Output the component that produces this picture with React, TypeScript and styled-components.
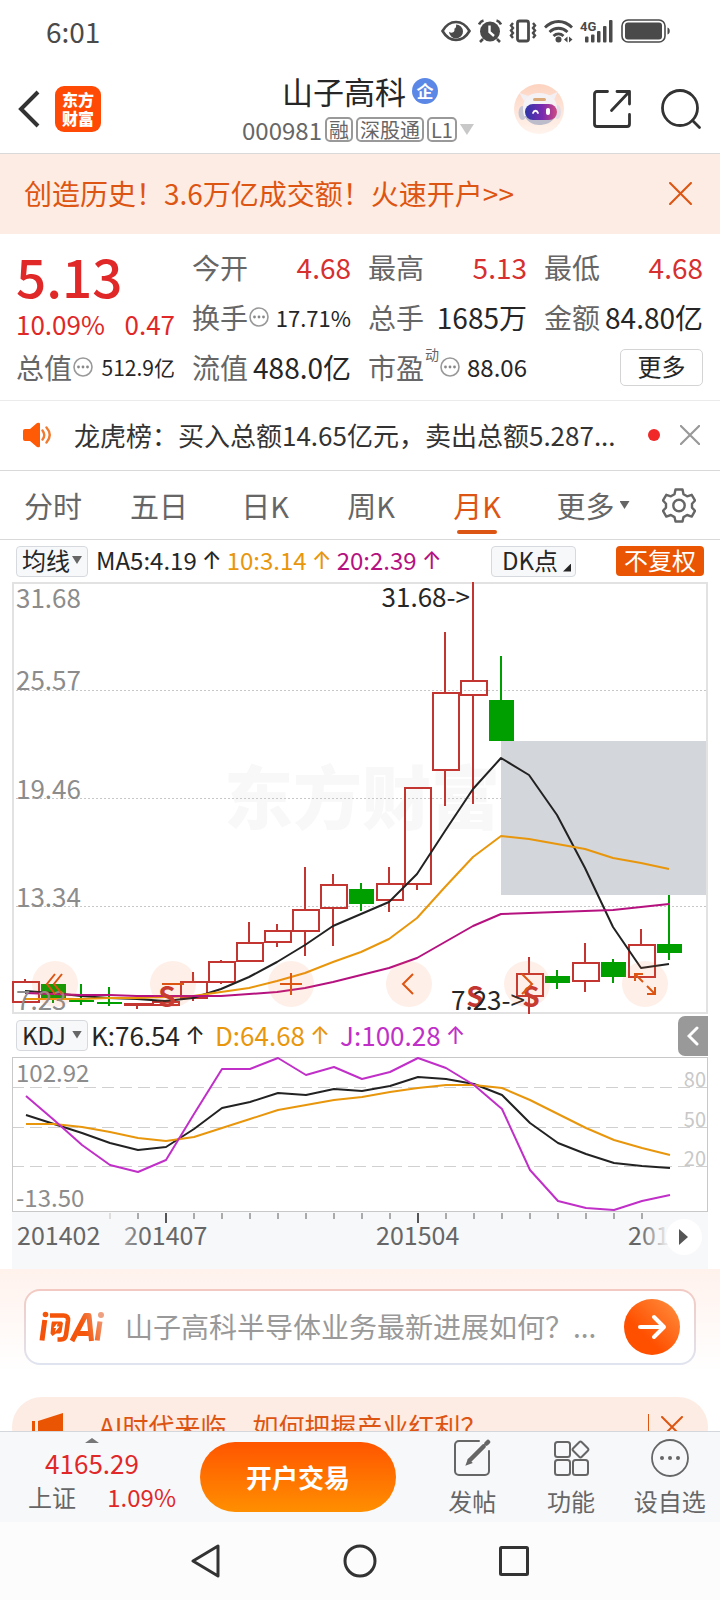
import React from "react";
import styled, { createGlobalStyle, css } from "styled-components";

const color = {
  ink: "#262626",
  text: "#333333",
  sub: "#666666",
  mute: "#8c8c8c",
  line: "#d9d9d9",
  red: "#e02828",
  up: "#c23531",
  down: "#009f00",
  orange: "#dd5512",
  brand: "#ea5504",
  amber: "#e8960c",
  purple: "#b5127f",
  violet: "#c030c8",
  peach: "#fdece3",
  panel: "#f7f8fa",
};

const fontStack = '"Noto Sans CJK SC", "Noto Sans", sans-serif';

const GlobalStyle = createGlobalStyle`
  *, *::before, *::after { box-sizing: border-box; }
  body { margin: 0; background: #fff; color: ${color.text}; font-family: ${fontStack}; }
  button, input { font: inherit; color: inherit; margin: 0; }
  button { padding: 0; border: 0; background: none; cursor: pointer; }
  svg { display: block; flex: none; }
  a { color: inherit; text-decoration: none; }
`;

const Shell = styled.div`
  display: flex;
  flex-direction: column;
  height: 100vh;
  overflow: hidden;
`;

const Main = styled.main`
  flex: 1;
  min-height: 0;
  overflow: hidden;
`;

/* ---------- status bar ---------- */
const StatusBar = styled.div`
  display: flex;
  align-items: center;
  justify-content: space-between;
  height: 64px;
  padding: 0 48px 2px 46px;
  font-size: 28px;
  line-height: 32px;
  color: #4a4a4a;
`;

const StatusIcons = styled.div`
  display: flex;
  align-items: center;
  gap: 7px;
`;

/* ---------- header ---------- */
const Header = styled.header`
  display: grid;
  grid-template-columns: 1fr auto 1fr;
  align-items: center;
  height: 90px;
  border-bottom: 1px solid ${color.line};
`;

const HeaderSide = styled.div<{ $end?: boolean }>`
  display: flex;
  align-items: center;
  gap: ${(p) => (p.$end ? "28px" : "14px")};
  padding: ${(p) => (p.$end ? "0 18px 0 0" : "0 0 0 17px")};
  justify-content: ${(p) => (p.$end ? "flex-end" : "flex-start")};
`;

const IconButton = styled.button`
  display: flex;
  align-items: center;
  justify-content: center;
`;

const BrandMark = styled.a`
  display: grid;
  place-content: center;
  width: 46px;
  height: 46px;
  border-radius: 9px;
  background: #ff4a05;
  color: #fff;
  font-size: 16px;
  font-weight: 900;
  line-height: 19px;
`;

const TitleBlock = styled.div`
  display: flex;
  flex-direction: column;
  align-items: center;
  gap: 8px;
  margin-right: 4px;
`;

const TitleRow = styled.h1`
  display: flex;
  align-items: center;
  gap: 6px;
  margin: 0 0 0 4px;
  font-size: 31px;
  font-weight: 400;
  line-height: 34px;
  color: ${color.ink};
`;

const CompanyBadge = styled.span`
  width: 26px;
  height: 26px;
  border-radius: 50%;
  background: #5b88e6;
  color: #fff;
  font-size: 17px;
  font-weight: 700;
  line-height: 25px;
  text-align: center;
`;

const CodeRow = styled.div`
  display: flex;
  align-items: center;
  gap: 3px;
  font-size: 24px;
  line-height: 28px;
  color: ${color.sub};
`;

const CodeTag = styled.span`
  padding: 0 2px;
  border: 2px solid #999;
  border-radius: 5px;
  font-size: 20px;
  line-height: 21px;
`;

const Caret = styled.span<{ $size: number; $color: string }>`
  width: ${(p) => p.$size * 2}px;
  height: ${(p) => Math.round(p.$size * 1.5)}px;
  background: ${(p) => p.$color};
  clip-path: polygon(0 0, 100% 0, 50% 100%);
`;

/* ---------- banner ---------- */
const Banner = styled.div`
  display: flex;
  align-items: center;
  justify-content: space-between;
  height: 80px;
  padding: 0 28px 2px 24px;
  background: ${color.peach};
  color: ${color.orange};
  font-size: 28px;
`;

/* ---------- quote ---------- */
const QuoteGrid = styled.section`
  display: grid;
  grid-template-columns: repeat(4, 1fr);
  grid-auto-rows: 50px;
  column-gap: 17px;
  padding: 8px 17px 8px 16px;
  border-bottom: 1px solid #ebebeb;
`;

const PriceBlock = styled.div`
  grid-row: span 2;
  color: ${color.red};
`;

const Price = styled.div`
  font-size: 53px;
  font-weight: 500;
  line-height: 66px;
`;

const PriceChange = styled.div`
  display: flex;
  justify-content: space-between;
  font-size: 26px;
  line-height: 32px;
`;

const Metric = styled.div`
  display: flex;
  align-items: center;
  justify-content: space-between;
  white-space: nowrap;
`;

const MetricLabel = styled.span`
  display: flex;
  align-items: center;
  gap: 1px;
  font-size: 28px;
  line-height: 40px;
  color: ${color.sub};
`;

const MetricSup = styled.sup`
  align-self: flex-start;
  font-size: 14px;
  line-height: 14px;
`;

const MetricValue = styled.span<{ $size?: number; $up?: boolean }>`
  font-size: ${(p) => p.$size ?? 28}px;
  line-height: 40px;
  color: ${(p) => (p.$up ? "#d63030" : color.ink)};
`;

const MoreButton = styled.button`
  align-self: center;
  justify-self: end;
  width: 83px;
  height: 37px;
  padding-bottom: 2px;
  border: 1px solid #d4d4d4;
  border-radius: 5px;
  font-size: 24px;
  line-height: 32px;
  color: ${color.ink};
`;

/* ---------- news ---------- */
const News = styled.div`
  display: flex;
  align-items: center;
  height: 70px;
  padding: 0 20px 2px 22px;
  border-bottom: 1px solid ${color.line};
  font-size: 26px;
  color: ${color.text};
`;

const NewsText = styled.a`
  flex: 1;
  margin-left: 22px;
  overflow: hidden;
  white-space: nowrap;
`;

const NewsDot = styled.span`
  width: 12px;
  height: 12px;
  margin-right: 20px;
  border-radius: 50%;
  background: #f02828;
`;

/* ---------- tabs ---------- */
const Tabs = styled.nav`
  display: grid;
  grid-template-columns: repeat(5, 1fr) 126px 46px;
  height: 69px;
  padding-right: 18px;
  border-bottom: 1px solid ${color.line};
`;

const Tab = styled.button<{ $active?: boolean }>`
  position: relative;
  display: flex;
  align-items: center;
  justify-content: center;
  gap: 5px;
  font-size: 29px;
  color: ${(p) => (p.$active ? color.orange : color.sub)};
  ${(p) =>
    p.$active &&
    css`
      &::after {
        content: "";
        position: absolute;
        bottom: 5px;
        width: 40px;
        height: 4px;
        border-radius: 2px;
        background: ${color.orange};
      }
    `}
`;

/* ---------- indicators ---------- */
const IndicatorRow = styled.div<{ $size: number }>`
  display: flex;
  align-items: center;
  height: ${(p) => (p.$size > 24 ? 43 : 42)}px;
  padding: 0 12px 0 16px;
  font-size: ${(p) => p.$size}px;
  line-height: 32px;
  white-space: nowrap;
`;

const PickerButton = styled.button`
  display: flex;
  align-items: center;
  justify-content: space-between;
  width: 72px;
  height: 31px;
  padding: 0 5px 2px 5px;
  border: 1px solid #d6dade;
  border-radius: 4px;
  background: ${color.panel};
  color: ${color.ink};
  font-size: 24px;
  line-height: 28px;
`;

const Reading = styled.span<{ $color: string; $gap: number }>`
  display: flex;
  align-items: center;
  gap: 5px;
  margin-left: ${(p) => p.$gap}px;
  padding-bottom: 2px;
  color: ${(p) => p.$color};
`;

const Arrow = styled.span`
  width: 20px;
  padding-top: 2px;
  font-family: Inter, ${fontStack};
  font-size: 24px;
  text-align: center;
`;

const DkButton = styled(PickerButton)`
  position: relative;
  width: 85px;
  margin-left: auto;
  padding-left: 10px;
  &::after {
    content: "";
    position: absolute;
    right: 4px;
    bottom: 4px;
    width: 8px;
    height: 8px;
    background: ${color.ink};
    clip-path: polygon(100% 0, 100% 100%, 0 100%);
  }
`;

const AdjustButton = styled.button`
  width: 88px;
  height: 30px;
  margin: 0 4px 0 40px;
  padding-bottom: 2px;
  border-radius: 4px;
  background: ${color.brand};
  color: #fff;
  font-size: 24px;
  line-height: 28px;
`;

const DrawerButton = styled.button`
  display: flex;
  align-items: center;
  justify-content: center;
  width: 30px;
  height: 40px;
  margin-left: auto;
  border-radius: 7px 0 0 7px;
  background: #999;
`;

/* ---------- charts ---------- */
const ChartFrame = styled.div`
  position: relative;
  margin: 0 12px;
`;

const ChartSvg = styled.svg`
  width: 100%;
  height: auto;
  font-family: ${fontStack};
`;

const ChartTools = styled.div`
  position: absolute;
  right: 40px;
  bottom: 7px;
  left: 20px;
  display: flex;
  justify-content: space-between;
`;

const ToolButton = styled.button`
  display: grid;
  place-items: center;
  width: 46px;
  height: 46px;
  border-radius: 50%;
  background: rgba(250, 110, 50, 0.11);
`;

const PlayButton = styled.button`
  position: absolute;
  top: 7px;
  right: 6px;
  display: grid;
  place-items: center;
  width: 36px;
  height: 36px;
  border-radius: 50%;
  background: #fff;
`;

/* ---------- AI ask ---------- */
const AskSection = styled.section`
  padding: 20px 24px 32px;
  background: linear-gradient(#fff2ed, #fff 80%);
`;

const AskBox = styled.form`
  display: flex;
  align-items: center;
  height: 76px;
  padding: 0 14px 0 13px;
  border: 2px solid transparent;
  border-radius: 16px;
  background: linear-gradient(#fff, #fff) padding-box,
    linear-gradient(#f3c9c2, #dfe4f0) border-box;
`;

const AskInput = styled.input`
  flex: 1;
  min-width: 0;
  margin: 0 20px;
  padding: 0 0 2px;
  border: 0;
  outline: 0;
  background: none;
  font-size: 28px;
  line-height: 40px;
  &::placeholder {
    color: #999;
    opacity: 1;
  }
`;

const SendButton = styled.button`
  display: grid;
  place-items: center;
  width: 56px;
  height: 56px;
  border-radius: 50%;
  background: linear-gradient(45deg, #ff5000 35%, #ff9242);
`;

const Promo = styled.div`
  display: flex;
  align-items: center;
  height: 60px;
  margin: 0 12px;
  padding: 0 25px 0 20px;
  border-radius: 30px;
  background: ${color.peach};
  color: ${color.orange};
  font-size: 26px;
`;

const PromoText = styled.a`
  flex: 1;
  margin-left: 36px;
  padding-bottom: 4px;
`;

const PromoDivider = styled.span`
  width: 1px;
  height: 26px;
  margin-right: 12px;
  background: ${color.orange};
`;

/* ---------- footer ---------- */
const Footer = styled.footer`
  display: flex;
  height: 91px;
  border-top: 1px solid #d4d7db;
  background: ${color.panel};
`;

const IndexButton = styled.button`
  display: flex;
  flex-direction: column;
  align-items: center;
  width: 184px;
  padding-top: 6px;
  color: ${color.red};
  font-size: 26px;
  line-height: 34px;
`;

const IndexCaret = styled.span`
  width: 14px;
  height: 5px;
  margin-bottom: 3px;
  background: #777;
  clip-path: polygon(50% 0, 100% 100%, 0 100%);
`;

const IndexLine = styled.span`
  display: flex;
  justify-content: space-between;
  width: 148px;
  margin-left: 20px;
  font-size: 24px;
  line-height: 34px;
`;

const IndexName = styled.span`
  color: ${color.sub};
`;

const TradeButton = styled.button`
  width: 196px;
  height: 70px;
  margin: 10px 28px 0 16px;
  padding-bottom: 2px;
  border-radius: 35px;
  background: linear-gradient(#ff5500, #ff8f00);
  color: #fff;
  font-size: 26px;
  font-weight: 700;
`;

const FooterItem = styled.button`
  display: flex;
  flex: 1;
  flex-direction: column;
  align-items: center;
  gap: 6px;
  padding: 7px 2px 0 0;
  color: ${color.sub};
  font-size: 24px;
  line-height: 36px;
  white-space: nowrap;
`;

const SystemNav = styled.nav`
  display: grid;
  grid-template-columns: repeat(3, 1fr);
  place-items: center;
  height: 78px;
  padding: 0 18%;
  background: #fcfcfc;
`;

/* ---------- data ---------- */
type Candle = [high: number, top: number, bottom: number, low: number, up: boolean];

const candles: Candle[] = [
  [397, 399, 420, 420, true],
  [402, 402, 416, 421, false],
  [402, 418, 420, 423, false],
  [405, 420, 422, 424, false],
  [421, 421, 423, 427, true],
  [419, 419, 423, 423, true],
  [390, 399, 416, 419, true],
  [378, 379, 400, 402, true],
  [340, 360, 379, 379, true],
  [342, 348, 360, 365, true],
  [285, 327, 349, 374, true],
  [292, 302, 326, 364, true],
  [301, 307, 322, 329, false],
  [285, 301, 318, 330, true],
  [205, 205, 302, 308, true],
  [50, 110, 188, 224, true],
  [0, 98, 113, 222, true],
  [74, 118, 159, 159, false],
  [375, 391, 414, 432, true],
  [388, 394, 401, 407, false],
  [361, 380, 399, 410, true],
  [377, 380, 395, 401, false],
  [347, 362, 395, 395, true],
  [313, 362, 371, 378, false],
];

const ma5 = [409, 411, 414, 416, 417, 419, 416, 407, 395, 380, 363, 344, 332, 320, 292, 249, 207, 176, 193, 233, 286, 345, 386, 382];
const ma10 = [417, 417, 417, 416, 416, 415, 414, 410, 406, 399, 391, 380, 370, 357, 336, 305, 275, 254, 257, 262, 267, 276, 281, 287];
const ma20 = [411, 412, 413, 413, 414, 414, 414, 414, 412, 410, 406, 400, 393, 386, 376, 360, 344, 332, 331, 330, 329, 328, 325, 322];

const kLine = [58, 67, 76, 86, 93, 90, 72, 51, 45, 36, 38, 32, 34, 29, 20, 22, 27, 38, 66, 86, 97, 106, 109, 111];
const dLine = [67, 67, 70, 75, 81, 84, 80, 71, 62, 53, 48, 43, 40, 35, 31, 28, 28, 31, 43, 57, 71, 83, 91, 98];
const jLine = [39, 63, 88, 108, 115, 103, 57, 12, 12, 1, 18, 10, 22, 15, 1, 11, 28, 52, 113, 144, 151, 153, 144, 138];

const STEP = 28;
const toPoints = (ys: number[], start: number) => ys.map((y, i) => `${start + i * STEP},${y}`).join(" ");

/* ---------- icons ---------- */
const Cross = ({ size, stroke, width = 2 }: { size: number; stroke: string; width?: number }) => (
  <svg width={size} height={size} viewBox="0 0 22 22" fill="none" stroke={stroke} strokeWidth={width} strokeLinecap="round">
    <path d="M1 1L21 21M21 1L1 21" />
  </svg>
);

const InfoDots = () => (
  <svg width="20" height="20" viewBox="0 0 20 20">
    <circle cx="10" cy="10" r="9" fill="none" stroke="#999" strokeWidth="1.6" />
    <g fill="#888">
      <circle cx="5.5" cy="10" r="1.4" />
      <circle cx="10" cy="10" r="1.4" />
      <circle cx="14.5" cy="10" r="1.4" />
    </g>
  </svg>
);

const EyeIcon = () => (
  <svg width="30" height="22" viewBox="0 0 30 22">
    <path d="M1.5 11C5 5 9.500 2 15 2s10 3 13.500 9C25 17 20.500 20 15 20S5 17 1.500 11z" fill="none" stroke="#4a4a4a" strokeWidth="2.600" />
    <path d="M15 4.500a7 7 0 1 1-7 7.300c2 1.600 4.500 1 5.300-.8.300-.7.300-1.500 0-2.200 1.400-.6 2.300-2.300 1.700-4.300z" fill="#4a4a4a" />
  </svg>
);

const AlarmIcon = () => (
  <svg width="24" height="24" viewBox="0 0 24 24">
    <circle cx="12" cy="12.500" r="10" fill="#4a4a4a" />
    <path d="M1 5.500C2 3.500 3.500 2 5.500 1.500M23 5.500c-1-2-2.500-3.500-4.500-4M5 20l-3 3M19 20l3 3" stroke="#4a4a4a" strokeWidth="2.600" fill="none" />
    <path d="M11.500 6.500v6.500l4.500 4" stroke="#fff" strokeWidth="2.400" fill="none" />
  </svg>
);

const VibrateIcon = () => (
  <svg width="28" height="24" viewBox="0 0 28 24" fill="none" stroke="#4a4a4a">
    <rect x="8.500" y="2" width="11" height="20" rx="2" strokeWidth="2.800" />
    <path d="M4 4L2 6.500 4 9l-2 2.500L4 14l-2 2.500L4 19M24 4l2 2.500L24 9l2 2.500-2 2.500 2 2.500-2 2.500" strokeWidth="2.400" />
  </svg>
);

const WifiIcon = () => (
  <svg width="29" height="24" viewBox="0 0 29 24">
    <g fill="none" stroke="#4a4a4a" strokeWidth="2.800">
      <path d="M1 8.500C9 .500 20 .500 28 8.500" />
      <path d="M5.500 13c5.500-5 12.500-5 18 0" />
      <path d="M9.500 17c3-2.800 7-2.800 10 0" />
    </g>
    <circle cx="14.500" cy="20.500" r="3" fill="#4a4a4a" />
    <path d="M20 20.500l3.500-3v6zM28.500 20.500l-3.500-3v6z" fill="#4a4a4a" />
  </svg>
);

const SignalIcon = () => (
  <svg width="34" height="24" viewBox="0 0 34 24" fill="#4a4a4a">
    <text x="0" y="12" fontSize="13" fontWeight="700" fontFamily="Roboto, sans-serif">4G</text>
    <rect x="5" y="17.500" width="3.500" height="6" rx="1" />
    <rect x="11" y="15.500" width="3.500" height="8" rx="1" />
    <rect x="17" y="12" width="3.500" height="11.500" rx="1" />
    <rect x="23" y="7" width="3.500" height="16.500" rx="1" />
    <rect x="29" y="1" width="3.500" height="22.500" rx="1" />
  </svg>
);

const BatteryIcon = () => (
  <svg width="51" height="24" viewBox="0 0 51 24">
    <rect x="1" y="1" width="43" height="22" rx="6" fill="none" stroke="#4a4a4a" strokeWidth="1.600" />
    <rect x="4" y="3.500" width="37" height="17" rx="3" fill="#4a4a4a" />
    <path d="M46.500 8.500c3 .5 3 6.500 0 7z" fill="#4a4a4a" />
  </svg>
);

const RobotIcon = () => (
  <svg width="50" height="50" viewBox="0 0 50 50">
    <defs>
      <linearGradient id="halo" x1="0" y1="0" x2="0" y2="1">
        <stop offset="0" stopColor="#fdd3c0" />
        <stop offset="1" stopColor="#fff4ee" />
      </linearGradient>
      <linearGradient id="visor" x1="0" y1="0" x2="1" y2="0">
        <stop offset="0" stopColor="#2d35a8" />
        <stop offset="0.550" stopColor="#7a2ab0" />
        <stop offset="1" stopColor="#d04a80" />
      </linearGradient>
    </defs>
    <circle cx="25" cy="25" r="25" fill="url(#halo)" />
    <path d="M10 17L5.500 9l9 3zM40 16l3.500-8-9 4z" fill="#f3f0f4" />
    <ellipse cx="8.500" cy="29" rx="4" ry="7" fill="#c9c6d4" />
    <ellipse cx="43.500" cy="28" rx="3.500" ry="7" fill="#e4dde6" />
    <path d="M9 25c0-11 6-16 16-16s18 5 18 16c0 10-7 15-18 15S9 35 9 25z" fill="#f5f2f6" />
    <path d="M10 32c4 6 9 9 15 9s13-2 17-9z" fill="#bdbccb" />
    <rect x="19" y="14" width="13" height="3" rx="1.500" fill="#dba878" />
    <rect x="11" y="20" width="32" height="16" rx="8" fill="url(#visor)" />
    <path d="M19 29c1-3 4-3 5 0" fill="none" stroke="#fff" strokeWidth="1.800" strokeLinecap="round" />
    <rect x="32" y="24" width="4" height="7" rx="2" fill="#fff" />
  </svg>
);

const GearIcon = () => (
  <svg width="34" height="35" viewBox="0 0 34 35" fill="none" stroke="#666" strokeWidth="2.400" strokeLinejoin="round">
    <path d="M13.500 1.500h7l1 4.700 3.600 2.100 4.600-1.500 3.300 5.700-3 3.300v3.800l3 3.200-3.300 5.800-4.600-1.600-3.600 2.100-1 4.400h-7l-1-4.400-3.600-2.100-4.600 1.600L1 22.800l3-3.200v-3.800l-3-3.300 3.300-5.700 4.600 1.500 3.600-2.100z" />
    <circle cx="17" cy="17.500" r="5.700" />
  </svg>
);

const tools: { label: string; path: string }[] = [
  { label: "跳到最早", path: "M12 2L4 12l8 10M19 2L11 12l8 10" },
  { label: "缩小", path: "M1 12h22" },
  { label: "放大", path: "M1 12h22M12 1v22" },
  { label: "左移", path: "M16 2L6 12l10 10" },
  { label: "右移", path: "M7 2l10 10L7 22" },
  { label: "全屏", path: "M10 10L2 2M2 9V2h8M14 14l8 8M22 15v7h-8" },
];

/* ---------- chart views ---------- */
const PriceChart = () => (
  <ChartFrame>
    <ChartSvg viewBox="0 0 696 432" role="img" aria-label="月K线图">
      <text x="212" y="242" fontSize="69" fontWeight="900" fill="#f8f8f8">东方财富</text>
      <g stroke="#c8c8c8" strokeDasharray="2 2">
        <path d="M0 108.500H696M0 216.500H696M0 324.500H696" />
      </g>
      <rect x="489" y="159" width="206" height="154" fill="#d3d6da" />
      <rect x="1" y="1" width="694" height="430" fill="none" stroke="#e2e2e2" strokeWidth="2" />
      <g fontSize="26" fill={color.mute}>
        <text x="4" y="26">31.68</text>
        <text x="4" y="108">25.57</text>
        <text x="4" y="217">19.46</text>
        <text x="4" y="325">13.34</text>
      </g>
      {candles.map(([high, top, bottom, low, up], i) => {
        const x = 13 + i * STEP;
        const tone = up ? color.up : color.down;
        return (
          <g key={i} stroke={tone} strokeWidth="2">
            {high < top && <path d={`M${x} ${high}V${top}`} />}
            {low > bottom && <path d={`M${x} ${bottom}V${low}`} />}
            {up ? (
              <rect x={x - 12} y={top + 1} width="26" height={Math.max(bottom - top - 1, 1)} fill="none" />
            ) : (
              <rect x={x - 12} y={top} width="25" height={bottom - top} fill={tone} stroke="none" />
            )}
          </g>
        );
      })}
      <g fill="none" strokeWidth="2" strokeLinejoin="round">
        <polyline points={toPoints(ma5, 13)} stroke="#222" />
        <polyline points={toPoints(ma10, 13)} stroke={color.amber} />
        <polyline points={toPoints(ma20, 13)} stroke={color.purple} />
      </g>
      <g fontSize="28" fontWeight="700" fill={color.up} textAnchor="middle">
        <text x="155" y="425">S</text>
        <text x="463" y="425">S</text>
        <text x="519" y="425">S</text>
      </g>
      <text x="4" y="428" fontSize="26" fill={color.mute}>7.23</text>
      <g fontSize="26" fill={color.ink} textAnchor="end">
        <text x="458" y="25">31.68-&gt;</text>
        <text x="513" y="428">7.23-&gt;</text>
      </g>
    </ChartSvg>
    <ChartTools>
      {tools.map((tool) => (
        <ToolButton key={tool.label} aria-label={tool.label}>
          <svg width="24" height="24" viewBox="0 0 24 24" fill="none" stroke={color.orange} strokeWidth="2">
            <path d={tool.path} />
          </svg>
        </ToolButton>
      ))}
    </ChartTools>
  </ChartFrame>
);

const KdjChart = () => (
  <ChartFrame>
    <ChartSvg viewBox="0 0 696 155" role="img" aria-label="KDJ指标图">
      <path d="M0 30.500H696M0 70.500H696M0 109.500H696" stroke="#d0d0d0" strokeWidth="1" strokeDasharray="12 6" />
      <rect x="0.500" y="0.500" width="695" height="154" fill="none" stroke="#c8c8c8" />
      <g fontSize="24" fill={color.mute}>
        <text x="4" y="25">102.92</text>
        <text x="4" y="150">-13.50</text>
      </g>
      <g fontSize="20" fill="#c8c8c8" textAnchor="end">
        <text x="694" y="30">80</text>
        <text x="694" y="70">50</text>
        <text x="694" y="109">20</text>
      </g>
      <g fill="none" strokeWidth="2" strokeLinejoin="round">
        <polyline points={toPoints(kLine, 14)} stroke="#222" />
        <polyline points={toPoints(dLine, 14)} stroke={color.amber} />
        <polyline points={toPoints(jLine, 14)} stroke={color.violet} />
      </g>
    </ChartSvg>
  </ChartFrame>
);

const TimeAxis = () => (
  <ChartFrame>
    <ChartSvg viewBox="0 0 696 57" role="img" aria-label="时间轴">
      <defs>
        <linearGradient id="fadeEnd" gradientUnits="userSpaceOnUse" x1="628" y1="0" x2="654" y2="0">
          <stop offset="0" stopColor={color.sub} />
          <stop offset="1" stopColor="#e8e8ea" />
        </linearGradient>
        <linearGradient id="fadeStart" gradientUnits="userSpaceOnUse" x1="110" y1="0" x2="132" y2="0">
          <stop offset="0" stopColor="#aaa" />
          <stop offset="1" stopColor={color.sub} />
        </linearGradient>
      </defs>
      <rect width="696" height="57" fill={color.panel} />
      {Array.from({ length: 20 }, (_, i) => {
        const x = 98 + i * STEP;
        const major = i === 2 || i === 11;
        return (
          <path
            key={i}
            d={`M${x} 1V${major ? 11 : 7}`}
            stroke={major ? "#555" : i === 0 ? "#ddd" : "#aaa"}
            strokeWidth="2"
          />
        );
      })}
      <g fontSize="25" fill={color.sub}>
        <text x="5" y="33">201402</text>
        <text x="112" y="33" fill="url(#fadeStart)">201407</text>
        <text x="364" y="33">201504</text>
        <text x="616" y="33" fill="url(#fadeEnd)">201</text>
      </g>
    </ChartSvg>
    <PlayButton aria-label="播放">
      <svg width="10" height="16" viewBox="0 0 10 16">
        <path d="M0 0l9 8-9 8z" fill="#555" />
      </svg>
    </PlayButton>
  </ChartFrame>
);

const AskLogo = () => (
  <svg width="66" height="32" viewBox="0 0 66 32" role="img" aria-label="问Ai">
    <defs>
      <linearGradient id="askTone" gradientUnits="userSpaceOnUse" x1="0" y1="32" x2="66" y2="6">
        <stop offset="0" stopColor="#f4500a" />
        <stop offset="0.650" stopColor="#f4560a" />
        <stop offset="1" stopColor="#f0a080" />
      </linearGradient>
    </defs>
    <g fill="none" stroke="url(#askTone)" strokeLinejoin="round">
      <path d="M5.800 9L3 29.500" strokeWidth="5" />
      <path d="M11 4.500h13.500q5 0 4.500 5L27 24q-.6 4.500-5 4.500h-3.500" strokeWidth="4.600" />
      <path d="M33 30L46.500 4.500h3.500L52.500 30M39 22.500H52" strokeWidth="5" />
      <path d="M61 10.500L58.200 29.500" strokeWidth="5" />
    </g>
    <path d="M13 10.500h9.500l1.500 1.500-1.500 9-1.500 1.500h-4l-3.500 2.500-2-2.500 1-10z" fill="#f4560a" />
    <circle cx="6.500" cy="3.500" r="2.800" fill="#f4560a" />
    <circle cx="62" cy="4" r="3" fill="#efa080" />
    <path d="M18.500 12l-4 5h2.500l-1 4 4.500-5.500H18z" fill="#fff" />
  </svg>
);

export default function App() {
  return (
    <Shell>
      <GlobalStyle />
      <StatusBar>
        <span>6:01</span>
        <StatusIcons>
          <EyeIcon />
          <AlarmIcon />
          <VibrateIcon />
          <WifiIcon />
          <SignalIcon />
          <BatteryIcon />
        </StatusIcons>
      </StatusBar>

      <Header>
        <HeaderSide>
          <IconButton aria-label="返回">
            <svg width="24" height="38" viewBox="0 0 24 38" fill="none" stroke="#333" strokeWidth="4">
              <path d="M21 2L4 19l17 17" />
            </svg>
          </IconButton>
          <BrandMark href="#">
            <span>东方</span>
            <span>财富</span>
          </BrandMark>
        </HeaderSide>
        <TitleBlock>
          <TitleRow>
            山子高科
            <CompanyBadge>企</CompanyBadge>
          </TitleRow>
          <CodeRow>
            000981
            <CodeTag>融</CodeTag>
            <CodeTag>深股通</CodeTag>
            <CodeTag>L1</CodeTag>
            <Caret $size={7} $color="#c8c8c8" />
          </CodeRow>
        </TitleBlock>
        <HeaderSide $end>
          <IconButton aria-label="智能助手">
            <RobotIcon />
          </IconButton>
          <IconButton aria-label="分享">
            <svg width="40" height="40" viewBox="0 0 40 40" fill="none" stroke="#333" strokeWidth="2.800" strokeLinecap="round" strokeLinejoin="round">
              <path d="M15.500 2.500H5A2.500 2.500 0 0 0 2.500 5v30A2.500 2.500 0 0 0 5 37.500h30a2.500 2.500 0 0 0 2.500-2.500V25.500M25 2.500h12.500V15M37 3L19.500 21.500" />
            </svg>
          </IconButton>
          <IconButton aria-label="搜索">
            <svg width="42" height="42" viewBox="0 0 42 42" fill="none" stroke="#333" strokeWidth="2.800" strokeLinecap="round">
              <circle cx="20" cy="20" r="17.500" />
              <path d="M32.500 32.500l7 7" />
            </svg>
          </IconButton>
        </HeaderSide>
      </Header>

      <Main>
        <Banner>
          <a href="#">创造历史！3.6万亿成交额！火速开户&gt;&gt;</a>
          <IconButton aria-label="关闭横幅">
            <Cross size={23} stroke={color.orange} />
          </IconButton>
        </Banner>

        <QuoteGrid>
          <PriceBlock>
            <Price>5.13</Price>
            <PriceChange>
              <span>10.09%</span>
              <span>0.47</span>
            </PriceChange>
          </PriceBlock>
          <Metric>
            <MetricLabel>今开</MetricLabel>
            <MetricValue $up>4.68</MetricValue>
          </Metric>
          <Metric>
            <MetricLabel>最高</MetricLabel>
            <MetricValue $up>5.13</MetricValue>
          </Metric>
          <Metric>
            <MetricLabel>最低</MetricLabel>
            <MetricValue $up>4.68</MetricValue>
          </Metric>
          <Metric>
            <MetricLabel>
              换手
              <InfoDots />
            </MetricLabel>
            <MetricValue $size={22}>17.71%</MetricValue>
          </Metric>
          <Metric>
            <MetricLabel>总手</MetricLabel>
            <MetricValue>1685万</MetricValue>
          </Metric>
          <Metric>
            <MetricLabel>金额</MetricLabel>
            <MetricValue>84.80亿</MetricValue>
          </Metric>
          <Metric>
            <MetricLabel>
              总值
              <InfoDots />
            </MetricLabel>
            <MetricValue $size={21}>512.9亿</MetricValue>
          </Metric>
          <Metric>
            <MetricLabel>流值</MetricLabel>
            <MetricValue>488.0亿</MetricValue>
          </Metric>
          <Metric>
            <MetricLabel>
              市盈
              <MetricSup>动</MetricSup>
              <InfoDots />
            </MetricLabel>
            <MetricValue $size={24}>88.06</MetricValue>
          </Metric>
          <MoreButton>更多</MoreButton>
        </QuoteGrid>

        <News>
          <svg width="30" height="26" viewBox="0 0 30 26">
            <path d="M1 9q0-2 2-2h5l7-6q3-1 3 1v22q0 2-3 1l-7-6H3q-2 0-2-2z" fill="#ff5a05" />
            <path d="M20.500 8.500q3.500 4.500 0 9M24.500 5.500q6.500 7.500 0 15" fill="none" stroke="#f07a30" strokeWidth="2.400" strokeLinecap="round" />
          </svg>
          <NewsText href="#">龙虎榜：买入总额14.65亿元，卖出总额5.287...</NewsText>
          <NewsDot />
          <IconButton aria-label="关闭消息">
            <Cross size={20} stroke="#999" width={2.4} />
          </IconButton>
        </News>

        <Tabs>
          <Tab>分时</Tab>
          <Tab>五日</Tab>
          <Tab>日K</Tab>
          <Tab>周K</Tab>
          <Tab $active>月K</Tab>
          <Tab>
            更多
            <Caret $size={5} $color={color.sub} />
          </Tab>
          <IconButton aria-label="设置">
            <GearIcon />
          </IconButton>
        </Tabs>

        <IndicatorRow $size={24}>
          <PickerButton>
            均线
            <Caret $size={5} $color={color.sub} />
          </PickerButton>
          <Reading $color={color.ink} $gap={8}>
            MA5:4.19<Arrow>↑</Arrow>
          </Reading>
          <Reading $color={color.amber} $gap={5}>
            10:3.14<Arrow>↑</Arrow>
          </Reading>
          <Reading $color={color.purple} $gap={5}>
            20:2.39<Arrow>↑</Arrow>
          </Reading>
          <DkButton>DK点</DkButton>
          <AdjustButton>不复权</AdjustButton>
        </IndicatorRow>

        <PriceChart />

        <IndicatorRow $size={26}>
          <PickerButton>
            KDJ
            <Caret $size={5} $color={color.sub} />
          </PickerButton>
          <Reading $color={color.ink} $gap={3}>
            K:76.54<Arrow>↑</Arrow>
          </Reading>
          <Reading $color={color.amber} $gap={10}>
            D:64.68<Arrow>↑</Arrow>
          </Reading>
          <Reading $color={color.violet} $gap={10}>
            J:100.28<Arrow>↑</Arrow>
          </Reading>
          <DrawerButton aria-label="展开指标">
            <svg width="12" height="20" viewBox="0 0 12 20" fill="none" stroke="#fff" strokeWidth="3" strokeLinecap="round">
              <path d="M10 2L2 10l8 8" />
            </svg>
          </DrawerButton>
        </IndicatorRow>

        <KdjChart />
        <TimeAxis />

        <AskSection>
          <AskBox>
            <AskLogo />
            <AskInput aria-label="向AI提问" placeholder="山子高科半导体业务最新进展如何？..." />
            <SendButton type="button" aria-label="发送">
              <svg width="30" height="26" viewBox="0 0 30 26" fill="none" stroke="#fff" strokeWidth="4" strokeLinecap="round" strokeLinejoin="round">
                <path d="M3 13h23M17 3l10 10-10 10" />
              </svg>
            </SendButton>
          </AskBox>
        </AskSection>

        <Promo>
          <svg width="31" height="28" viewBox="0 0 31 28" fill={color.brand}>
            <path d="M0 8h3v12H0zM6 8L31 0v28L6 20z" />
          </svg>
          <PromoText href="#">AI时代来临，如何把握产业红利？</PromoText>
          <PromoDivider />
          <IconButton aria-label="关闭推广">
            <Cross size={22} stroke={color.orange} />
          </IconButton>
        </Promo>
      </Main>

      <Footer>
        <IndexButton>
          <IndexCaret />
          <span>4165.29</span>
          <IndexLine>
            <IndexName>上证</IndexName>
            <span>1.09%</span>
          </IndexLine>
        </IndexButton>
        <TradeButton>开户交易</TradeButton>
        <FooterItem>
          <svg width="38" height="38" viewBox="0 0 38 38" fill="none" stroke="#666" strokeWidth="2" strokeLinecap="round">
            <path d="M26 2H6a4 4 0 0 0-4 4v26a4 4 0 0 0 4 4h26a4 4 0 0 0 4-4V12" />
            <path d="M30.500 7.500L17 21M35 3l-1.500 1.500" strokeWidth="4.500" />
            <path d="M14 25l1.500-4 2.500 2.500z" fill="#666" />
          </svg>
          发帖
        </FooterItem>
        <FooterItem>
          <svg width="38" height="38" viewBox="0 0 38 38" fill="none" stroke="#666" strokeWidth="2">
            <rect x="3" y="3" width="15" height="15" rx="2.500" />
            <rect x="3" y="21" width="15" height="15" rx="2.500" />
            <rect x="21" y="21" width="15" height="15" rx="2.500" />
            <path d="M27.200 3.200q1.300-1.300 2.600 0l6 6q1.300 1.300 0 2.600l-6 6q-1.300 1.300-2.600 0l-6-6q-1.300-1.300 0-2.600z" />
          </svg>
          功能
        </FooterItem>
        <FooterItem>
          <svg width="38" height="38" viewBox="0 0 38 38" fill="none" stroke="#666" strokeWidth="1.800">
            <circle cx="19" cy="19" r="18" />
            <g fill="#666" stroke="none">
              <circle cx="11" cy="19" r="2" />
              <circle cx="19" cy="19" r="2" />
              <circle cx="27" cy="19" r="2" />
            </g>
          </svg>
          设自选
        </FooterItem>
      </Footer>

      <SystemNav>
        <IconButton aria-label="系统返回">
          <svg width="30" height="34" viewBox="0 0 30 34" fill="none" stroke="#333" strokeWidth="3" strokeLinejoin="round">
            <path d="M27 2v30L2 17z" />
          </svg>
        </IconButton>
        <IconButton aria-label="主屏幕">
          <svg width="34" height="34" viewBox="0 0 34 34" fill="none" stroke="#333" strokeWidth="3">
            <circle cx="17" cy="17" r="15" />
          </svg>
        </IconButton>
        <IconButton aria-label="最近任务">
          <svg width="30" height="30" viewBox="0 0 30 30" fill="none" stroke="#333" strokeWidth="3">
            <rect x="1.500" y="1.500" width="27" height="27" rx="1" />
          </svg>
        </IconButton>
      </SystemNav>
    </Shell>
  );
}
